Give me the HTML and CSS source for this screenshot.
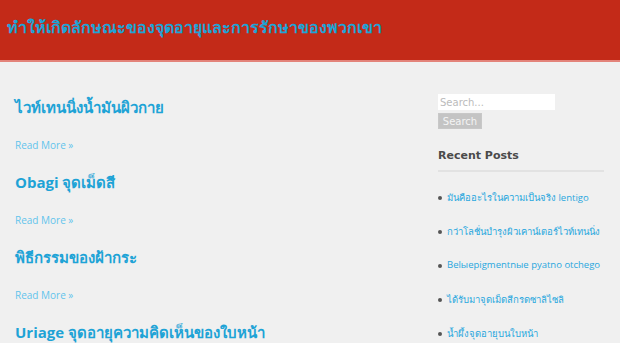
FILE: index.html
```html
<!DOCTYPE html>
<html>
<head>
<meta charset="utf-8">
<link rel="stylesheet" href="styles.css">
</head>
<body>
<header class="site-header">
  <h1 class="site-title">ทำให้เกิดลักษณะของจุดอายุและการรักษาของพวกเขา</h1>
</header>
<div class="wrap">
  <main class="content">
    <article class="post">
      <h2 class="post-title">ไวท์เทนนิ่งน้ำมันผิวกาย</h2>
      <a class="more" href="#">Read More »</a>
    </article>
    <article class="post">
      <h2 class="post-title">Obagi จุดเม็ดสี</h2>
      <a class="more" href="#">Read More »</a>
    </article>
    <article class="post">
      <h2 class="post-title">พิธีกรรมของฝ้ากระ</h2>
      <a class="more" href="#">Read More »</a>
    </article>
    <article class="post">
      <h2 class="post-title">Uriage จุดอายุความคิดเห็นของใบหน้า</h2>
    </article>
  </main>
  <aside class="sidebar">
    <form class="search">
      <input class="search-input" type="text" placeholder="Search...">
      <button class="search-btn" type="button">Search</button>
    </form>
    <h3 class="widget-title">Recent Posts</h3>
    <ul class="recent">
      <li><a href="#">มันคืออะไรในความเป็นจริง lentigo</a></li>
      <li><a href="#">กว่าโลชั่นบำรุงผิวเคาน์เตอร์ไวท์เทนนิ่ง</a></li>
      <li><a href="#">Belыepigmentnыe pyatno otchego</a></li>
      <li><a href="#">ได้รับมาจุดเม็ดสีกรดซาลิไซลิ</a></li>
      <li><a href="#">น้ำผึ้งจุดอายุบนใบหน้า</a></li>
    </ul>
  </aside>
</div>
</body>
</html>
```
FILE: styles.css
```css
html, body {
  margin: 0;
  padding: 0;
}
body {
  background: #f0f0f0;
  font-family: "DejaVu Sans", sans-serif;
  overflow: hidden;
  height: 343px;
}
.site-header {
  background: #c32a18;
  height: 60px;
  border-bottom: 2px solid #e3837a;
  display: flex;
  align-items: center;
  padding-left: 7px;
}
.site-title {
  margin: 0;
  color: #1ea3d6;
  font-size: 16px;
  font-weight: bold;
  padding-bottom: 6px;
}
.wrap {
  display: flex;
  padding-left: 15px;
}
.content {
  width: 423px;
  padding-top: 32px;
}
.post {
  height: 75px;
}
.post-title {
  margin: 0;
  color: #1ea3d6;
  font-family: "Open Sans", sans-serif;
  font-size: 15px;
  font-weight: bold;
  line-height: 26px;
}
.more {
  display: block;
  margin-top: 18px;
  color: #62c4ec;
  font-family: "Open Sans", sans-serif;
  font-size: 10px;
  text-decoration: none;
}
.sidebar {
  width: 170px;
  padding-top: 32px;
}
.search {
  display: flex;
  flex-direction: column;
  align-items: flex-start;
  gap: 3px;
}
.search-input {
  width: 117px;
  height: 16px;
  box-sizing: border-box;
  border: none;
  background: #fff;
  font-size: 10px;
  padding: 0 2px;
  font-family: "DejaVu Sans", sans-serif;
}
.search-input::placeholder { color: #bbb; }
.search-btn {
  height: 16px;
  width: 44px;
  border: 1px solid #c8c8c8;
  background: #c4c4c4;
  color: #f4f4f4;
  font-size: 10px;
  padding: 0;
  font-family: "DejaVu Sans", sans-serif;
}
.widget-title {
  margin: 20px 0 0;
  width: 166px;
  font-size: 11px;
  color: #4a4a4a;
  font-weight: bold;
  padding-bottom: 8px;
  border-bottom: 2px solid #e2e2e2;
}
.recent {
  margin: 0;
  padding: 18px 0 0 7px;
  list-style: none;
}
.recent li {
  height: 34px;
  font-size: 9.5px;
  font-family: "Open Sans", sans-serif;
  color: #555;
  display: flex;
  gap: 5px;
  white-space: nowrap;
}
.recent li::before {
  content: "";
  flex: none;
  width: 4px;
  height: 4px;
  border-radius: 50%;
  background: #555;
  margin-top: 6px;
  margin-left: -7px;
}
.recent a {
  color: #29a7de;
  text-decoration: none;
}
```
